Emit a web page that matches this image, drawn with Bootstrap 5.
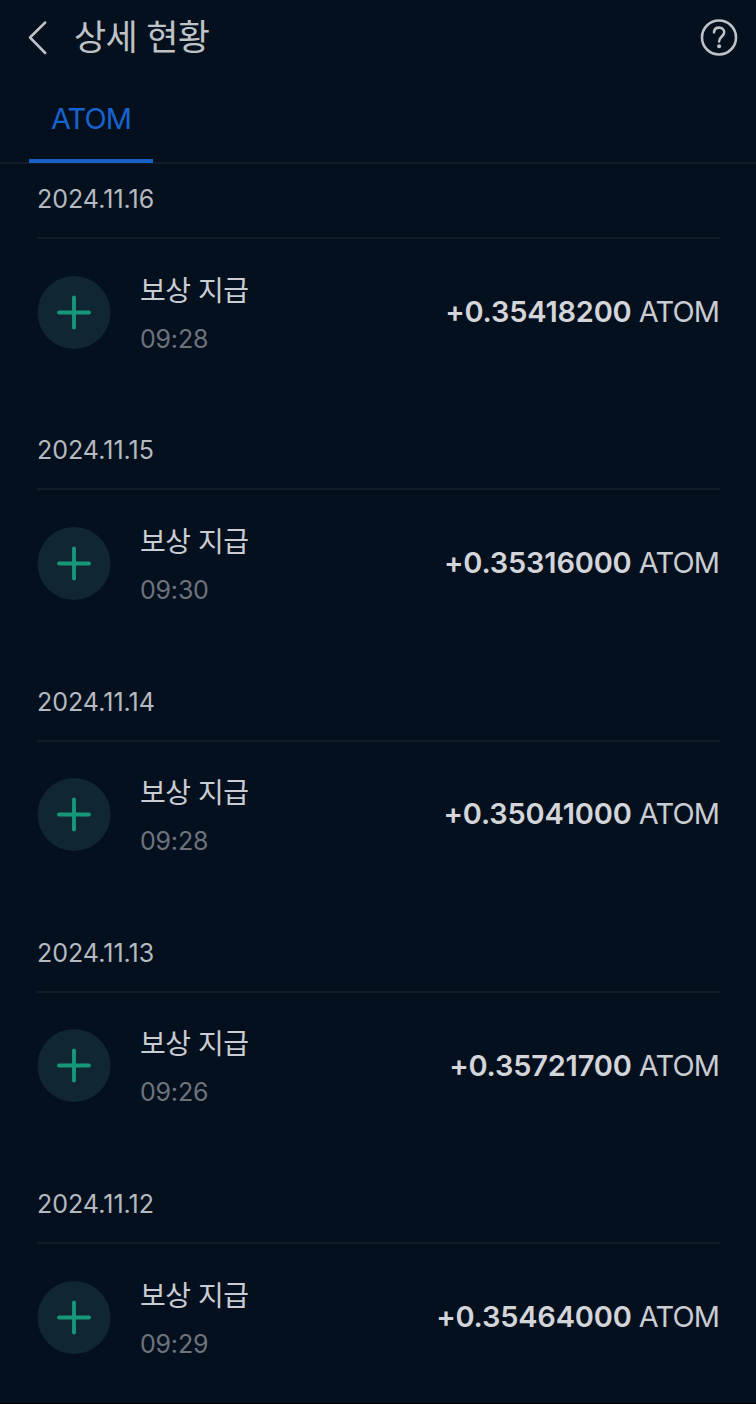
<!DOCTYPE html>
<html lang="ko" data-bs-theme="dark">
<head>
<meta charset="utf-8">
<meta name="viewport" content="width=device-width, initial-scale=1">
<title>상세 현황</title>
<link href="https://cdn.jsdelivr.net/npm/bootstrap@5.3.0/dist/css/bootstrap.min.css" rel="stylesheet">
<style>
body{background:#04101d;color:#c9ccd2;font-family:Inter,"Noto Sans CJK KR",sans-serif;height:1404px;overflow:hidden;border-bottom:1px solid #000}
.topbar{height:76px;padding:0 18px 0 28px}
.topbar h1{font-size:35px;font-weight:400;line-height:48px;margin:-2px 0 0 26px;color:#bfc2c7;letter-spacing:-.7px}
.coin-tabs{height:88px;border-bottom:2px solid #131d29;padding-left:29px}
.coin-tabs .nav-link{width:124px;height:87px;margin-bottom:-1px;padding:0;border-bottom:4px solid #1660c8;color:#1763ce;font-size:29px;line-height:86px;text-align:center;letter-spacing:-.9px}
.day{height:251.25px;padding:0 36px 0 37px}
.day-date{height:75px;border-bottom:2px solid #131d29;font-size:25px;line-height:71px;color:#b5b9c0;font-weight:400}
.reward{height:147px}
.plus{width:74px;height:74px;margin-right:29px;flex:none}
.kind{font-size:28px;line-height:48px;color:#c9ccd2;letter-spacing:-.5px;padding-top:5px}
.time{font-size:25px;line-height:49px;color:#6d737d;letter-spacing:-.2px}
.amount{font-size:29px;line-height:40px;letter-spacing:-.9px;margin-top:-1.5px;padding-right:1px}
.amount strong{font-weight:600;color:#d3d5da;letter-spacing:-.2px}
</style>
</head>
<body>
<header class="topbar d-flex align-items-center">
  <svg width="20" height="36" viewBox="0 0 20 36" fill="none" stroke="#bfc2c7" stroke-width="2.5" stroke-linecap="round" stroke-linejoin="round"><path d="M17.2 2.5 2 17.5 17.2 33"/></svg>
  <h1>상세 현황</h1>
  <svg class="ms-auto" width="38" height="38" viewBox="0 0 38 38" fill="none" stroke="#bfc2c7" stroke-width="2.6" stroke-linecap="round"><circle cx="19" cy="18.5" r="17"/><path d="M14 13.3C14.2 10.2 16.1 8.6 19.1 8.6c3.1 0 5.1 1.9 5.1 4.6 0 4.1-5.1 4.5-5.1 9.3"/><circle cx="19.1" cy="27.3" r="2" fill="#bfc2c7" stroke="none"/></svg>
</header>
<nav class="coin-tabs nav"><a class="nav-link" href="#">ATOM</a></nav>
<main id="days"></main>
<script>
const rewards = [
  ['2024.11.16','09:28','0.35418200'],
  ['2024.11.15','09:30','0.35316000'],
  ['2024.11.14','09:28','0.35041000'],
  ['2024.11.13','09:26','0.35721700'],
  ['2024.11.12','09:29','0.35464000']
];
document.getElementById('days').innerHTML = rewards.map(([date,time,sum]) => `
<section class="day">
  <div class="day-date">${date}</div>
  <div class="reward d-flex align-items-center">
    <svg class="plus" viewBox="0 0 74 74"><circle cx="37" cy="36.5" r="36.5" fill="#102632"/><path d="M22 36.5h30M37 21.5v30" fill="none" stroke="#16977a" stroke-width="3.9" stroke-linecap="round"/></svg>
    <div><div class="kind">보상 지급</div><div class="time">${time}</div></div>
    <div class="amount ms-auto text-nowrap"><strong>+${sum}</strong> ATOM</div>
  </div>
</section>`).join('');
</script>
<script src="https://cdn.jsdelivr.net/npm/bootstrap@5.3.0/dist/js/bootstrap.bundle.min.js"></script>
</body>
</html>
